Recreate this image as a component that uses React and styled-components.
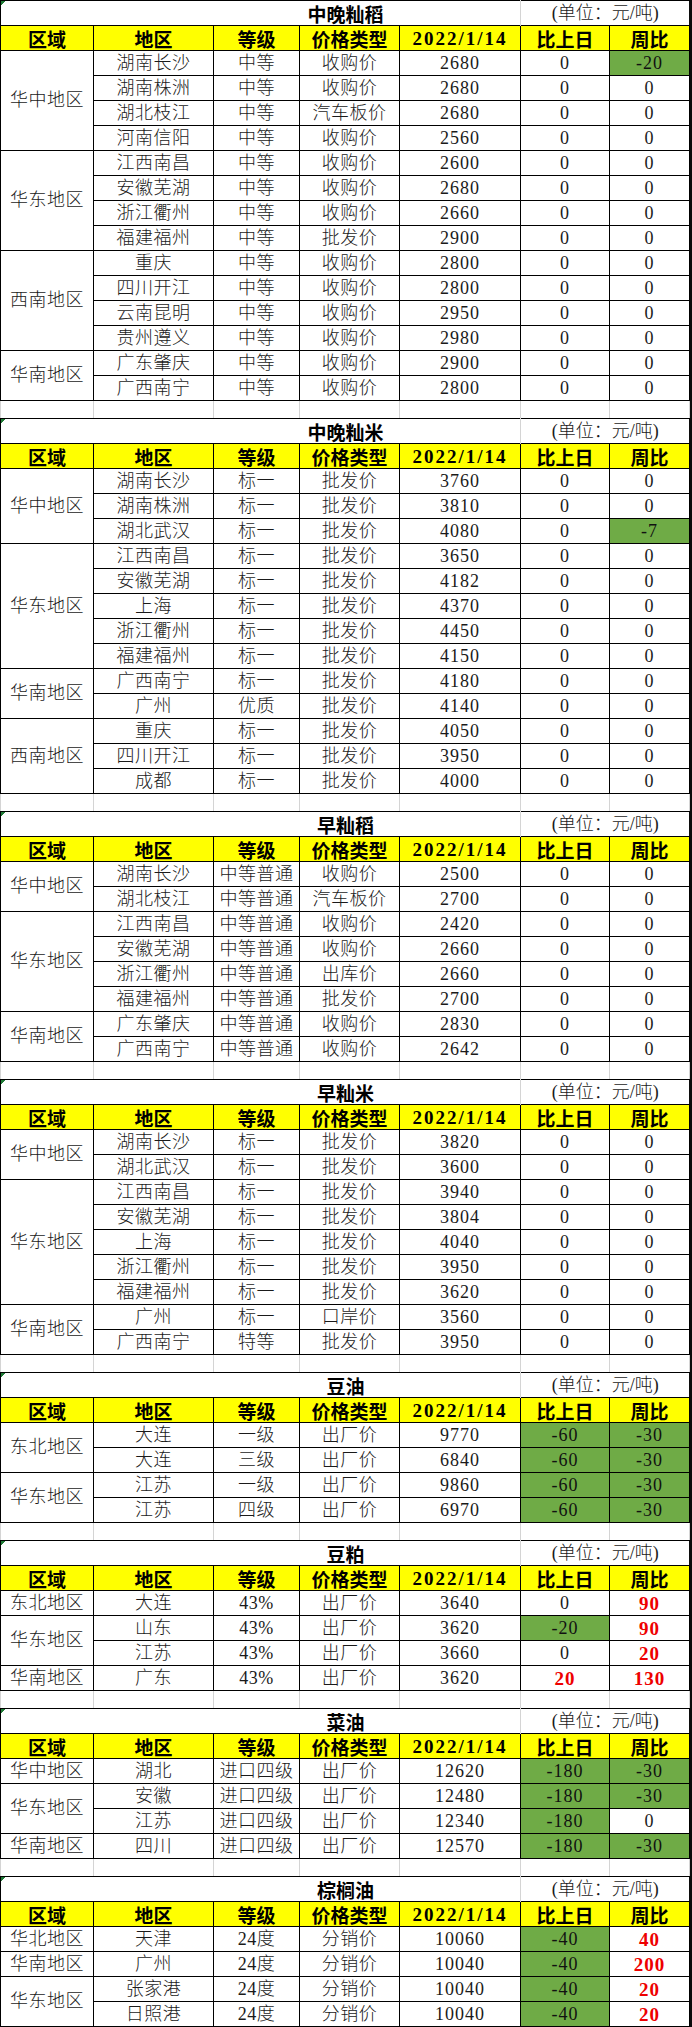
import styled, { createGlobalStyle } from 'styled-components'

const GlobalStyle = createGlobalStyle`
  html, body {
    margin: 0;
    padding: 0;
    background: #fff;
  }
  body {
    font-family: "Noto Sans CJK SC", "Noto Sans", sans-serif;
  }
`

const COLS = [93, 120, 86, 100, 121, 89, 80]
const HEADERS = ['区域', '地区', '等级', '价格类型', '2022/1/14', '比上日', '周比']

const g = (v) => ({ v, tone: 'green' })
const r = (v) => ({ v, tone: 'red' })

const sections = [
  {
    title: '中晚籼稻',
    groups: [
      { region: '华中地区', rows: [
        ['湖南长沙', '中等', '收购价', '2680', '0', g('-20')],
        ['湖南株洲', '中等', '收购价', '2680', '0', '0'],
        ['湖北枝江', '中等', '汽车板价', '2680', '0', '0'],
        ['河南信阳', '中等', '收购价', '2560', '0', '0'],
      ] },
      { region: '华东地区', rows: [
        ['江西南昌', '中等', '收购价', '2600', '0', '0'],
        ['安徽芜湖', '中等', '收购价', '2680', '0', '0'],
        ['浙江衢州', '中等', '收购价', '2660', '0', '0'],
        ['福建福州', '中等', '批发价', '2900', '0', '0'],
      ] },
      { region: '西南地区', rows: [
        ['重庆', '中等', '收购价', '2800', '0', '0'],
        ['四川开江', '中等', '收购价', '2800', '0', '0'],
        ['云南昆明', '中等', '收购价', '2950', '0', '0'],
        ['贵州遵义', '中等', '收购价', '2980', '0', '0'],
      ] },
      { region: '华南地区', rows: [
        ['广东肇庆', '中等', '收购价', '2900', '0', '0'],
        ['广西南宁', '中等', '收购价', '2800', '0', '0'],
      ] },
    ],
  },
  {
    title: '中晚籼米',
    groups: [
      { region: '华中地区', rows: [
        ['湖南长沙', '标一', '批发价', '3760', '0', '0'],
        ['湖南株洲', '标一', '批发价', '3810', '0', '0'],
        ['湖北武汉', '标一', '批发价', '4080', '0', g('-7')],
      ] },
      { region: '华东地区', rows: [
        ['江西南昌', '标一', '批发价', '3650', '0', '0'],
        ['安徽芜湖', '标一', '批发价', '4182', '0', '0'],
        ['上海', '标一', '批发价', '4370', '0', '0'],
        ['浙江衢州', '标一', '批发价', '4450', '0', '0'],
        ['福建福州', '标一', '批发价', '4150', '0', '0'],
      ] },
      { region: '华南地区', rows: [
        ['广西南宁', '标一', '批发价', '4180', '0', '0'],
        ['广州', '优质', '批发价', '4140', '0', '0'],
      ] },
      { region: '西南地区', rows: [
        ['重庆', '标一', '批发价', '4050', '0', '0'],
        ['四川开江', '标一', '批发价', '3950', '0', '0'],
        ['成都', '标一', '批发价', '4000', '0', '0'],
      ] },
    ],
  },
  {
    title: '早籼稻',
    groups: [
      { region: '华中地区', rows: [
        ['湖南长沙', '中等普通', '收购价', '2500', '0', '0'],
        ['湖北枝江', '中等普通', '汽车板价', '2700', '0', '0'],
      ] },
      { region: '华东地区', rows: [
        ['江西南昌', '中等普通', '收购价', '2420', '0', '0'],
        ['安徽芜湖', '中等普通', '收购价', '2660', '0', '0'],
        ['浙江衢州', '中等普通', '出库价', '2660', '0', '0'],
        ['福建福州', '中等普通', '批发价', '2700', '0', '0'],
      ] },
      { region: '华南地区', rows: [
        ['广东肇庆', '中等普通', '收购价', '2830', '0', '0'],
        ['广西南宁', '中等普通', '收购价', '2642', '0', '0'],
      ] },
    ],
  },
  {
    title: '早籼米',
    groups: [
      { region: '华中地区', rows: [
        ['湖南长沙', '标一', '批发价', '3820', '0', '0'],
        ['湖北武汉', '标一', '批发价', '3600', '0', '0'],
      ] },
      { region: '华东地区', rows: [
        ['江西南昌', '标一', '批发价', '3940', '0', '0'],
        ['安徽芜湖', '标一', '批发价', '3804', '0', '0'],
        ['上海', '标一', '批发价', '4040', '0', '0'],
        ['浙江衢州', '标一', '批发价', '3950', '0', '0'],
        ['福建福州', '标一', '批发价', '3620', '0', '0'],
      ] },
      { region: '华南地区', rows: [
        ['广州', '标一', '口岸价', '3560', '0', '0'],
        ['广西南宁', '特等', '批发价', '3950', '0', '0'],
      ] },
    ],
  },
  {
    title: '豆油',
    groups: [
      { region: '东北地区', rows: [
        ['大连', '一级', '出厂价', '9770', g('-60'), g('-30')],
        ['大连', '三级', '出厂价', '6840', g('-60'), g('-30')],
      ] },
      { region: '华东地区', rows: [
        ['江苏', '一级', '出厂价', '9860', g('-60'), g('-30')],
        ['江苏', '四级', '出厂价', '6970', g('-60'), g('-30')],
      ] },
    ],
  },
  {
    title: '豆粕',
    groups: [
      { region: '东北地区', rows: [
        ['大连', '43%', '出厂价', '3640', '0', r('90')],
      ] },
      { region: '华东地区', rows: [
        ['山东', '43%', '出厂价', '3620', g('-20'), r('90')],
        ['江苏', '43%', '出厂价', '3660', '0', r('20')],
      ] },
      { region: '华南地区', rows: [
        ['广东', '43%', '出厂价', '3620', r('20'), r('130')],
      ] },
    ],
  },
  {
    title: '菜油',
    groups: [
      { region: '华中地区', rows: [
        ['湖北', '进口四级', '出厂价', '12620', g('-180'), g('-30')],
      ] },
      { region: '华东地区', rows: [
        ['安徽', '进口四级', '出厂价', '12480', g('-180'), g('-30')],
        ['江苏', '进口四级', '出厂价', '12340', g('-180'), '0'],
      ] },
      { region: '华南地区', rows: [
        ['四川', '进口四级', '出厂价', '12570', g('-180'), g('-30')],
      ] },
    ],
  },
  {
    title: '棕榈油',
    groups: [
      { region: '华北地区', rows: [
        ['天津', '24度', '分销价', '10060', g('-40'), r('40')],
      ] },
      { region: '华南地区', rows: [
        ['广州', '24度', '分销价', '10040', g('-40'), r('200')],
      ] },
      { region: '华东地区', rows: [
        ['张家港', '24度', '分销价', '10040', g('-40'), r('20')],
        ['日照港', '24度', '分销价', '10040', g('-40'), r('20')],
      ] },
    ],
    last: true,
  },
]

const Sheet = styled.div`
  width: 692px;
  box-sizing: border-box;
  border-right: 3px solid #0c0c0c;
  background: #fff;
`

const Table = styled.table`
  width: 689px;
  border-collapse: collapse;
  table-layout: fixed;
`

const Col = styled.col`
  width: ${(p) => p.$w}px;
`

const TitleCell = styled.td`
  height: 24px;
  padding: 0 0 0 170px;
  border-top: 1px solid #000;
  border-left: 1px solid #000;
  border-right: 1px solid #d4d4d4;
  text-align: center;
  font-family: "Noto Sans CJK SC", sans-serif;
  font-weight: 700;
  font-size: 19px;
  line-height: 23px;
  color: #000;
  background-image: linear-gradient(135deg, #1f7a36 0 3px, transparent 3px);
  background-size: 6px 6px;
  background-repeat: no-repeat;
`

const UnitCell = styled.td`
  height: 24px;
  padding: 0;
  border-top: 1px solid #000;
  text-align: center;
  font-family: "Liberation Serif", "Noto Sans CJK SC", serif;
  font-size: 18px;
  font-weight: 300;
  line-height: 23px;
  color: #1a1a1a;
`

const HeadCell = styled.th`
  height: 24px;
  padding: 0;
  border: 1px solid #000;
  background: #ffff00;
  text-align: center;
  font-family: ${(p) => (p.$num ? '"Liberation Serif", serif' : '"Noto Sans CJK SC", sans-serif')};
  font-weight: 700;
  font-size: 19px;
  letter-spacing: ${(p) => (p.$num ? '2px' : '0')};
  line-height: 23px;
  color: #000;
`

const tones = {
  green: 'background: #6fab46; color: #111;',
  red: 'color: #ee0000; font-weight: 700; font-size: 19px;',
}

const Cell = styled.td`
  height: 24px;
  padding: 0;
  border: 1px solid #000;
  text-align: center;
  vertical-align: middle;
  font-family: "Liberation Serif", "Noto Sans CJK SC", serif;
  font-size: 18px;
  font-weight: 300;
  letter-spacing: ${(p) => (p.$num ? '1px' : '0.5px')};
  line-height: 23px;
  color: #1a1a1a;
  white-space: nowrap;
  ${(p) => (p.$tone ? tones[p.$tone] : '')}
`

const SpacerCell = styled.td`
  height: 17px;
  padding: 0;
  border-left: 1px solid #d4d4d4;
  border-right: 1px solid #d4d4d4;
`

function Value({ item }) {
  const v = typeof item === 'string' ? { v: item } : item
  return <Cell $num $tone={v.tone}>{v.v}</Cell>
}

function Section({ section }) {
  return (
    <Table>
      <colgroup>
        {COLS.map((w, i) => <Col key={i} $w={w} />)}
      </colgroup>
      <tbody>
        <tr>
          <TitleCell colSpan={5}>{section.title}</TitleCell>
          <UnitCell colSpan={2}>(单位：元/吨)</UnitCell>
        </tr>
        <tr>
          {HEADERS.map((h, i) => (
            <HeadCell key={h} $num={i === 4}>{h}</HeadCell>
          ))}
        </tr>
        {section.groups.map((grp) =>
          grp.rows.map((row, i) => (
            <tr key={grp.region + i}>
              {i === 0 && <Cell rowSpan={grp.rows.length}>{grp.region}</Cell>}
              <Cell>{row[0]}</Cell>
              <Cell>{row[1]}</Cell>
              <Cell>{row[2]}</Cell>
              <Cell $num>{row[3]}</Cell>
              <Value item={row[4]} />
              <Value item={row[5]} />
            </tr>
          ))
        )}
        {!section.last && (
          <tr>
            {COLS.map((w, i) => <SpacerCell key={i} />)}
          </tr>
        )}
      </tbody>
    </Table>
  )
}

export default function App() {
  return (
    <>
      <GlobalStyle />
      <Sheet>
        {sections.map((s) => <Section key={s.title} section={s} />)}
      </Sheet>
    </>
  )
}
